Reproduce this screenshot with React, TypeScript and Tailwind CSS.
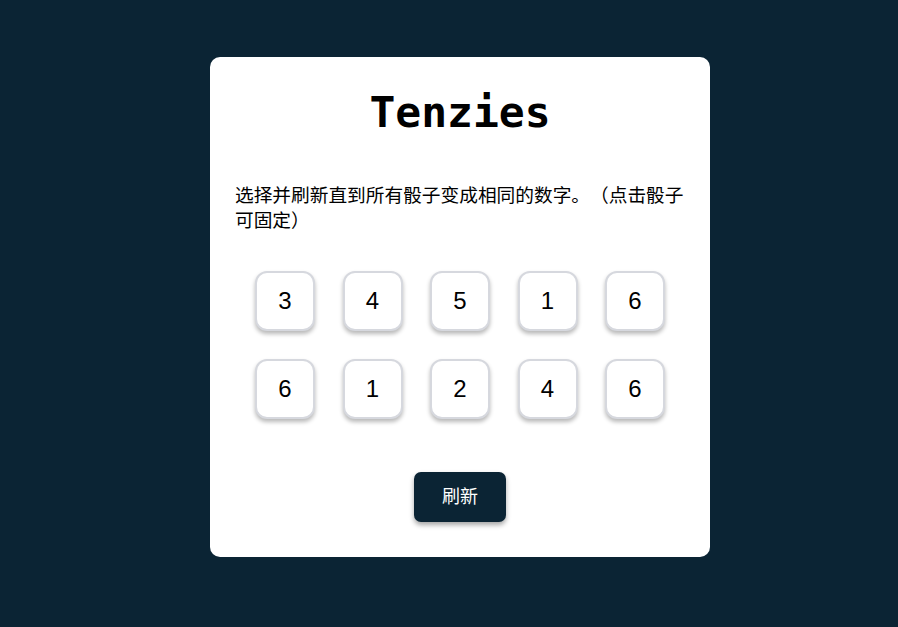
import React from "react";

const dice = [3, 4, 5, 1, 6, 6, 1, 2, 4, 6];

export default function App() {
  return (
    <div className="min-h-[627px] w-full bg-[#0b2434] flex justify-center pl-[22px] pt-[57px]">
      <main
        className="w-[500px] h-[500px] bg-white rounded-[10px] flex flex-col items-center px-[20px]"
        style={{ fontFamily: '"Liberation Sans", "Noto Sans CJK SC", sans-serif' }}
      >
        <h1
          className="mt-[30px] text-[43px] leading-[50px] font-bold text-black"
          style={{ fontFamily: '"DejaVu Sans Mono", monospace' }}
        >
          Tenzies
        </h1>
        <p className="mt-[46px] w-full pl-[5px] text-[18.7px] leading-[25px] text-black [text-spacing-trim:space-all] [font-feature-settings:'chws'_0]">
          选择并刷新直到所有骰子变成相同的数字。（点击骰子可固定）
        </p>
        <div className="mt-[38px] grid grid-cols-5 gap-x-[27.5px] gap-y-[28px]">
          {dice.map((d, i) => (
            <button
              key={i}
              className="w-[60px] h-[60px] rounded-[12px] bg-white border-2 border-[#d6d8de] shadow-[0_3px_4px_rgba(0,0,0,0.28)] flex items-center justify-center text-[24px] text-black"
            >
              {d}
            </button>
          ))}
        </div>
        <button className="mt-[53px] w-[92px] h-[50px] rounded-[7px] bg-[#0b2434] text-white text-[18px] shadow-[0_3px_5px_rgba(0,0,0,0.35)]">
          刷新
        </button>
      </main>
    </div>
  );
}
